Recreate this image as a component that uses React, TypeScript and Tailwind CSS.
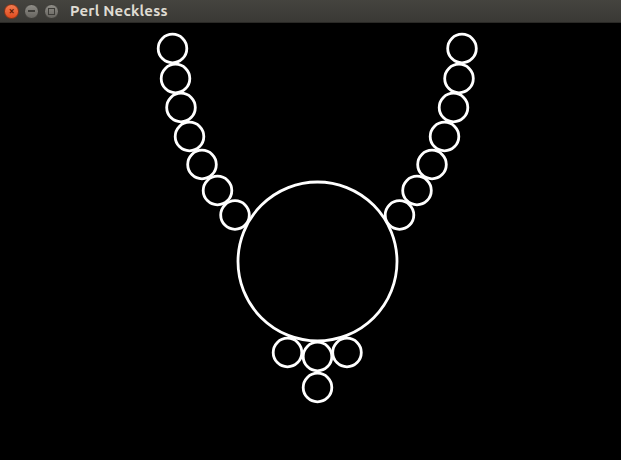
const beads: [number, number][] = [
  [172.5, 48.5],
  [175.5, 78.5],
  [181, 107.5],
  [189.5, 136.5],
  [202, 164.5],
  [217.5, 190.5],
  [235, 215],
  [462, 48.5],
  [459, 78.5],
  [453.5, 107.5],
  [444.5, 136.5],
  [432, 164.5],
  [417, 190.5],
  [399.5, 215],
  [287.5, 352.5],
  [347, 352.5],
  [317.5, 356.5],
  [317.5, 387.5],
]

function TitleBar() {
  return (
    <div className="flex h-[23px] items-center bg-gradient-to-b from-[#45443f] to-[#3a3935] border-b border-[#2a2926]">
      <div className="flex items-center gap-[5px] pl-[4px]">
        <div className="flex h-[15px] w-[15px] items-center justify-center rounded-full bg-gradient-to-b from-[#f27b4f] to-[#df4a1c] border border-[#8a3416] text-[10px] leading-none text-[#5a1a05] font-bold">
          ×
        </div>
        <div className="flex h-[15px] w-[15px] items-center justify-center rounded-full bg-gradient-to-b from-[#8f8d87] to-[#66645f] border border-[#3e3d39]">
          <div className="h-[1.5px] w-[7px] bg-[#3d3c38]" />
        </div>
        <div className="flex h-[15px] w-[15px] items-center justify-center rounded-full bg-gradient-to-b from-[#8f8d87] to-[#66645f] border border-[#3e3d39]">
          <div className="h-[7px] w-[7px] border border-[#3d3c38]" />
        </div>
      </div>
      <span className="ml-[11px] font-['Ubuntu','Open_Sans','DejaVu_Sans',sans-serif] text-[15px] font-bold tracking-[0.2px] text-[#dfdbd2]">
        Perl Neckless
      </span>
    </div>
  )
}

export default function App() {
  return (
    <div className="flex h-[460px] w-[621px] flex-col overflow-hidden bg-black">
      <TitleBar />
      <svg width="621" height="437" viewBox="0 23 621 437" className="block">
        <circle cx={317.5} cy={261.5} r={79.5} fill="none" stroke="white" strokeWidth={2.8} />
        {beads.map(([x, y], i) => (
          <circle key={i} cx={x} cy={y} r={14.3} fill="none" stroke="white" strokeWidth={2.8} />
        ))}
      </svg>
    </div>
  )
}
